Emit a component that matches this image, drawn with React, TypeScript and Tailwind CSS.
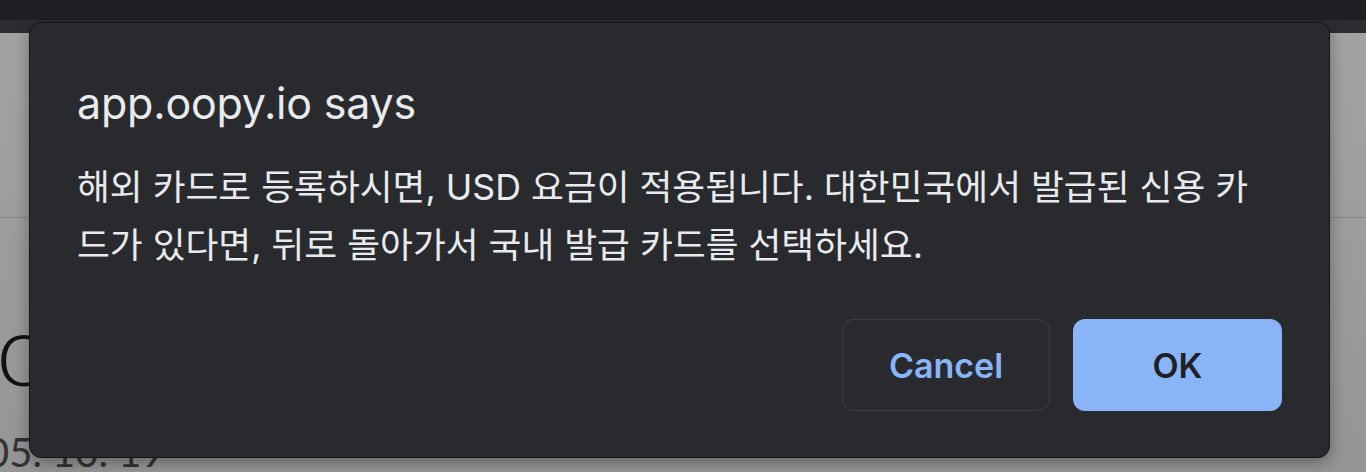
export default function App() {
  return (
    <div className="relative w-[1366px] h-[472px] overflow-hidden bg-[#9c9c9c] font-['Inter','Noto_Sans_CJK_KR',sans-serif]">
      <div className="h-[20px] bg-[#1f2023]" />
      <div className="h-[13px] bg-[#2c2d31]" />
      <div className="h-[439px] bg-gradient-to-b from-[#a3a3a3] to-[#959595] flex flex-col">
        <div className="h-[188px] border-b border-[#878787]" />
        <div className="h-[95px]" />
        <div className="ml-[-4px] h-[70px] flex items-center text-[100px] leading-none text-[#111] font-['Lato',sans-serif] font-light">o</div>
        <div className="mt-[50px] ml-[-14px] text-[40px] leading-none text-[#333] font-['Lato',sans-serif] whitespace-nowrap">05. 10. 19</div>
      </div>

      <div className="absolute left-[29px] top-[22px] w-[1301px] h-[436px] rounded-[12px] bg-[#292a2e] border border-[#151618] shadow-[0_4px_16px_rgba(0,0,0,0.35)] flex flex-col px-[47px] pb-[46px]">
        <div className="mt-[56px] text-[43px] leading-[48px] text-[#e8eaed] tracking-[-0.2px]">app.oopy.io says</div>
        <div className="mt-[31px] text-[35.7px] leading-[58px] text-[#e8eaed] font-['Inter','Noto_Sans_CJK_KR',sans-serif]">
          <div className="whitespace-nowrap">해외 카드로 등록하시면, USD 요금이 적용됩니다. 대한민국에서 발급된 신용 카</div>
          <div className="whitespace-nowrap">드가 있다면, 뒤로 돌아가서 국내 발급 카드를 선택하세요.</div>
        </div>
        <div className="mt-auto flex justify-end gap-[23px]">
          <button className="w-[208px] h-[92px] rounded-[12px] border border-[#3c3d42] bg-transparent text-[#8ab4f8] text-[34px] font-semibold">Cancel</button>
          <button className="w-[209px] h-[92px] rounded-[12px] bg-[#8ab4f8] text-[#202124] text-[34px] font-semibold">OK</button>
        </div>
      </div>
    </div>
  );
}
